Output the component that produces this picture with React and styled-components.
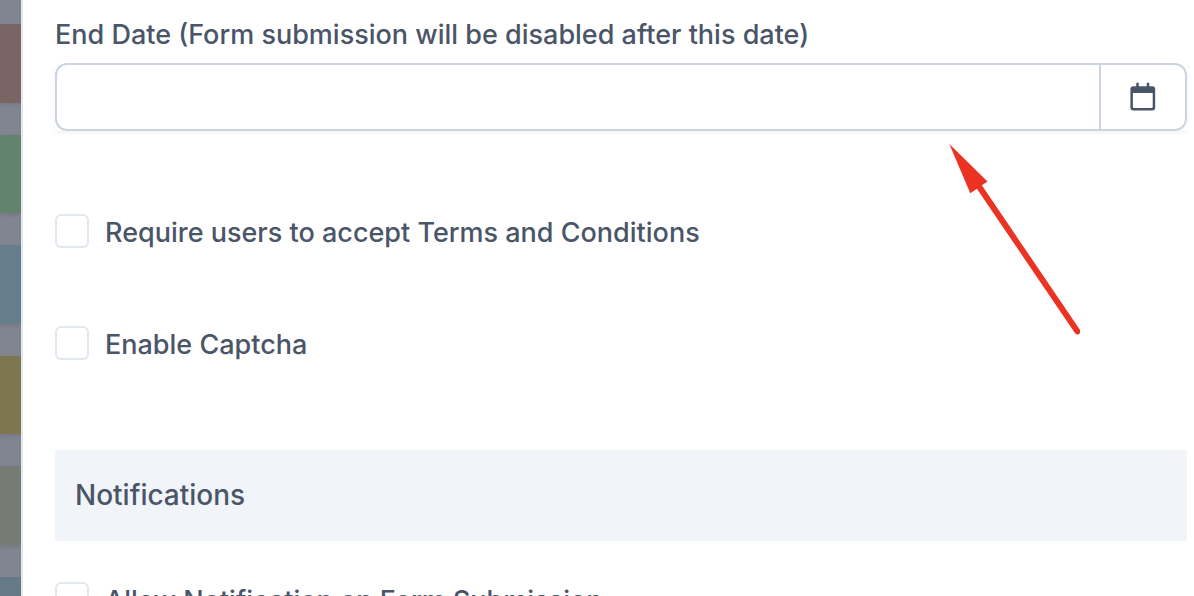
import React, { useState } from "react";
import styled, { createGlobalStyle } from "styled-components";

const stripes = ["#7c6465", "#62846f", "#667e8c", "#7d774f", "#767c73", "#667987"];

export default function App() {
  const [endDate, setEndDate] = useState("");
  const [settings, setSettings] = useState({
    terms: false,
    captcha: false,
    notify: false,
  });
  const toggle = (e) => {
    setSettings({ ...settings, [e.target.name]: e.target.checked });
  };
  return (
    <>
      <GlobalStyle />
      <Page>
        <Backdrop>
          {stripes.map((color) => (
            <Stripe key={color} $color={color} />
          ))}
        </Backdrop>
        <Panel>
          <FieldLabel htmlFor="end-date">
            End Date (Form submission will be disabled after this date)
          </FieldLabel>
          <DateGroup>
            <DateInput
              id="end-date"
              type="text"
              value={endDate}
              onChange={(e) => setEndDate(e.target.value)}
            />
            <DateButton type="button" aria-label="Open calendar">
              <CalendarIcon />
            </DateButton>
          </DateGroup>
          <Options>
            <CheckOption
              name="terms"
              label="Require users to accept Terms and Conditions"
              checked={settings.terms}
              onChange={toggle}
            />
            <CheckOption
              name="captcha"
              label="Enable Captcha"
              checked={settings.captcha}
              onChange={toggle}
            />
          </Options>
          <SectionTitle>Notifications</SectionTitle>
          <CheckOption
            name="notify"
            label="Allow Notification on Form Submission"
            checked={settings.notify}
            onChange={toggle}
          />
          <Arrow />
        </Panel>
      </Page>
    </>
  );
}

function CheckOption({ name, label, checked, onChange }) {
  return (
    <OptionLabel>
      <Checkbox
        type="checkbox"
        name={name}
        checked={checked}
        onChange={onChange}
      />
      <span>{label}</span>
    </OptionLabel>
  );
}

function CalendarIcon() {
  return (
    <svg width="26" height="30" viewBox="0 0 26 30" aria-hidden="true">
      <path
        fill="#4a5568"
        fillRule="evenodd"
        d="M3.4 4.2H22.2A3 3 0 0 1 25.2 7.2V25.6A3 3 0 0 1 22.2 28.6H3.4A3 3 0 0 1 .4 25.6V7.2A3 3 0 0 1 3.4 4.2ZM2.9 11V25A1 1 0 0 0 3.9 26H21.7A1 1 0 0 0 22.7 25V11Z"
      />
      <path
        d="M7.5 1.8V6M18 1.8V6"
        stroke="#4a5568"
        strokeWidth="2.6"
        strokeLinecap="round"
      />
    </svg>
  );
}

function Arrow() {
  return (
    <ArrowSvg width="140" height="200" viewBox="0 0 140 200" aria-hidden="true">
      <path d="M9.3 4L47.5 41.5L30.3 53.2Z" fill="#eb3323" />
      <path
        d="M38 45L137.4 191.4"
        stroke="#eb3323"
        strokeWidth="6"
        strokeLinecap="round"
      />
    </ArrowSvg>
  );
}

const GlobalStyle = createGlobalStyle`
  * {
    box-sizing: border-box;
  }
  body {
    margin: 0;
    background-color: #fff;
    color: #4a5568;
    font-family: Inter, "Liberation Sans", sans-serif;
    font-size: 27px;
    font-weight: 500;
  }
`;

const Page = styled.div`
  display: flex;
  height: 100vh;
  overflow: hidden;
`;

const Backdrop = styled.div`
  flex: none;
  display: flex;
  flex-direction: column;
  gap: 32px;
  width: 21px;
  padding-top: 24px;
  overflow: hidden;
  background-color: #808590;
`;

const Stripe = styled.div`
  flex: none;
  height: 79px;
  background-color: ${(props) => props.$color};
  box-shadow: 0 2px 4px rgba(0, 0, 0, 0.1);
  &:nth-child(even) {
    height: 78px;
  }
`;

const Panel = styled.main`
  position: relative;
  flex: 1;
  min-width: 0;
  padding: 15px 7px 0 32px;
  border-left: 2px solid #e2e8f0;
`;

const FieldLabel = styled.label`
  display: block;
  margin-bottom: 8px;
  line-height: 40px;
`;

const DateGroup = styled.div`
  display: flex;
  height: 68px;
  box-shadow: 0 2px 4px rgba(0, 0, 0, 0.05);
`;

const DateInput = styled.input`
  flex: 1;
  min-width: 0;
  padding: 0 20px;
  border: 2px solid #cbd5e0;
  border-right: none;
  border-radius: 12px 0 0 12px;
  background-color: #fff;
  color: inherit;
  font: inherit;
  outline: none;
`;

const DateButton = styled.button`
  display: flex;
  align-items: center;
  justify-content: center;
  width: 88px;
  padding: 0;
  border: 2px solid #cbd5e0;
  border-radius: 0 12px 12px 0;
  background-color: #fff;
  cursor: pointer;
`;

const Options = styled.div`
  display: flex;
  flex-direction: column;
  gap: 74px;
  padding: 83px 0 86px;
`;

const OptionLabel = styled.label`
  display: flex;
  align-items: flex-start;
  gap: 16px;
  line-height: 38px;
  white-space: nowrap;
`;

const Checkbox = styled.input`
  appearance: none;
  flex: none;
  width: 34px;
  height: 34px;
  margin: 0;
  border: 2px solid #e2e8f0;
  border-radius: 6px;
  background-color: #fff;
  &:checked {
    background-color: #4a5568;
  }
`;

const SectionTitle = styled.h2`
  margin: 0 0 41px;
  padding: 25px 20px 26px;
  background-color: #f1f5fa;
  font-size: 28px;
  font-weight: 500;
  line-height: 40px;
`;

const ArrowSvg = styled.svg`
  position: absolute;
  top: 140px;
  right: 114px;
  pointer-events: none;
`;
